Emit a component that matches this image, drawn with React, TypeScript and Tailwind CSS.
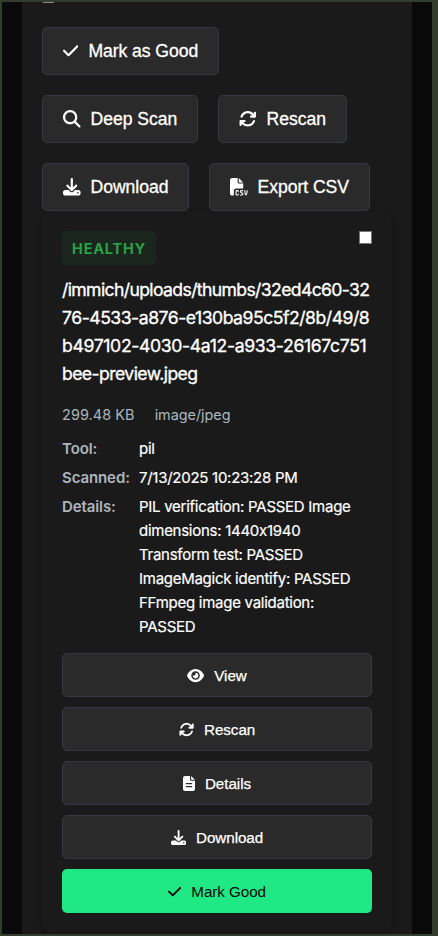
import type { ReactNode } from 'react';
import {
  FaArrowsRotate,
  FaCheck,
  FaDownload,
  FaEye,
  FaFileCsv,
  FaMagnifyingGlass,
} from 'react-icons/fa6';

function FileLinesIcon() {
  return (
    <svg viewBox="0 0 12 15" className="h-[15px] w-3 shrink-0" fill="none" stroke="none">
      <path
        fillRule="evenodd"
        fill="currentColor"
        d="M2 0H7V3.6Q7 4.8 8.2 4.8H12V13Q12 15 10 15H2Q0 15 0 13V2Q0 0 2 0ZM3.3 7.1a.6.6 0 0 0 0 1.2H8.7a.6.6 0 0 0 0-1.2ZM3.3 10.1a.6.6 0 0 0 0 1.2H8.7a.6.6 0 0 0 0-1.2Z"
      />
      <path fill="currentColor" d="M8.1 0L12 3.8H8.1Z" />
    </svg>
  );
}

function ToolbarButton({ icon, label, width }: { icon: ReactNode; label: string; width: string }) {
  return (
    <button
      className={`flex h-12 items-center gap-2.5 rounded-[5px] border border-[#343a40] bg-[#2a2a2a] pl-5 font-['Liberation_Sans',Arial,sans-serif] text-[17.6px] font-normal tracking-[-0.06px] whitespace-nowrap text-white [-webkit-text-stroke:0.3px_white] ${width}`}
    >
      {icon}
      <span>{label}</span>
    </button>
  );
}

function CardButton({ icon, label }: { icon: ReactNode; label: string }) {
  return (
    <button className="flex h-11 w-full items-center justify-center gap-2.5 rounded-[5px] border border-[#343a40] bg-[#2a2a2a] pt-px font-['Liberation_Sans',Arial,sans-serif] text-[15.2px] tracking-[-0.05px] whitespace-nowrap text-white [-webkit-text-stroke:0.25px_white]">
      {icon}
      <span className="pt-[2px]">{label}</span>
    </button>
  );
}

function Row({ label, children }: { label: string; children: ReactNode }) {
  return (
    <div className="flex leading-6">
      <span className="w-[77px] shrink-0 font-semibold tracking-[-0.1px] text-[#adb5bd]">{label}</span>
      <span className="tracking-[-0.27px] whitespace-nowrap text-white [-webkit-text-stroke:0.2px_white]">{children}</span>
    </div>
  );
}

export default function App() {
  return (
    <div className="h-[936px] w-[438px] overflow-hidden border-y-2 border-r-[6px] border-l-2 border-[#323d2e] bg-[#0a0a0a] px-5 font-[Inter,sans-serif] [font-feature-settings:'calt'_0]">
      <div className="h-[932px] overflow-hidden bg-[#1a1a1a] px-5">
        <div className="ml-px h-px w-[11px] bg-[#8a8a8a]" />
        <div className="mt-6 flex flex-col gap-5">
          <ToolbarButton icon={<FaCheck className="w-[15.4px] shrink-0" />} label="Mark as Good" width="w-[177px]" />
          <div className="flex gap-5">
            <ToolbarButton icon={<FaMagnifyingGlass className="shrink-0" />} label="Deep Scan" width="w-[156px]" />
            <ToolbarButton icon={<FaArrowsRotate className="shrink-0" />} label="Rescan" width="w-[129px]" />
          </div>
          <div className="flex gap-5">
            <ToolbarButton icon={<FaDownload className="shrink-0" />} label="Download" width="w-[147px]" />
            <ToolbarButton icon={<FaFileCsv className="shrink-0" />} label="Export CSV" width="w-[161px]" />
          </div>
        </div>

        <div className="h-[722px] w-[350px] rounded-[10px] bg-[#1a1a1a] px-5 pt-5 shadow-[0_2px_8px_rgba(0,0,0,0.3)]">
          <div className="flex items-start justify-between">
            <span className="flex h-[34px] w-[94px] items-center justify-center rounded-[5px] bg-[#1b261e] pt-px text-[14.4px] font-semibold tracking-[0.95px] text-[#28a745] [-webkit-text-stroke:0.2px_#28a745]">
              HEALTHY
            </span>
            <span className="size-[13px] border border-[#767676] bg-white" />
          </div>

          <div className="mt-[11px] text-[17.6px] leading-7 font-normal whitespace-nowrap text-white [-webkit-text-stroke:0.35px_white]">
            <div className="tracking-[-0.63px]">/immich/uploads/thumbs/32ed4c60-32</div>
            <div className="tracking-[-0.48px]">76-4533-a876-e130ba95c5f2/8b/49/8</div>
            <div className="tracking-[-0.34px]">b497102-4030-4a12-a933-26167c751</div>
            <div className="tracking-[-0.58px]">bee-preview.jpeg</div>
          </div>

          <div className="mt-[15px] flex gap-5 text-[14.4px] leading-6 text-[#adb5bd]">
            <span className="tracking-[0.1px]">299.48 KB</span>
            <span className="tracking-[-0.03px]">image/jpeg</span>
          </div>

          <div className="mt-[10px] flex flex-col gap-[5px] text-[15px]">
            <Row label="Tool:">pil</Row>
            <Row label="Scanned:">7/13/2025 10:23:28 PM</Row>
            <Row label="Details:">
              <div>PIL verification: PASSED Image</div>
              <div>dimensions: 1440x1940</div>
              <div>Transform test: PASSED</div>
              <div>ImageMagick identify: PASSED</div>
              <div>FFmpeg image validation:</div>
              <div>PASSED</div>
            </Row>
          </div>

          <div className="mt-[14px] flex flex-col gap-2.5">
            <CardButton icon={<FaEye className="w-[17.1px]" />} label="View" />
            <CardButton icon={<FaArrowsRotate />} label="Rescan" />
            <CardButton icon={<FileLinesIcon />} label="Details" />
            <CardButton icon={<FaDownload />} label="Download" />
            <button className="flex h-11 w-full items-center justify-center gap-2.5 rounded-[5px] bg-[#20e885] pt-px font-['Liberation_Sans',Arial,sans-serif] text-[15.2px] tracking-[-0.05px] text-[#0a0a0a]">
              <FaCheck className="w-[13.3px]" />
              <span className="pt-[2px]">Mark Good</span>
            </button>
          </div>
        </div>
      </div>
    </div>
  );
}
